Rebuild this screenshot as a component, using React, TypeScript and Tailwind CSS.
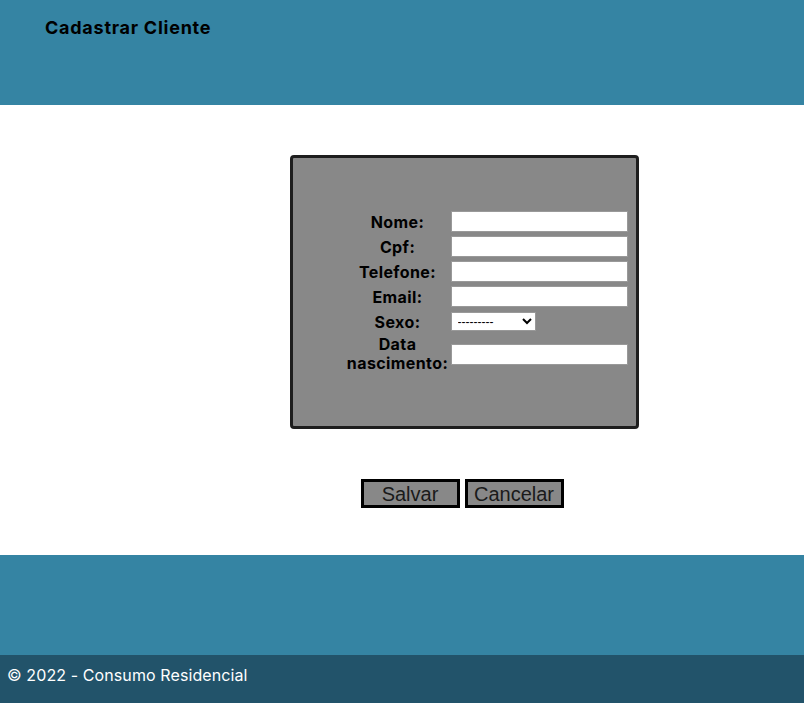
export default function App() {
  const rows = [
    { label: "Nome" },
    { label: "Cpf" },
    { label: "Telefone" },
    { label: "Email" },
  ];

  return (
    <div className="min-h-[703px] w-full bg-white font-['Inter',sans-serif]">
      {/* HEADER */}
      <header className="h-[105px] bg-[#3584a3] pl-[45px] pt-[14px]">
        <h1 className="text-[18px] font-bold tracking-[0.75px] text-black">Cadastrar Cliente</h1>
      </header>

      {/* MAIN */}
      <main className="flex h-[450px] flex-col items-center pl-[120px] pt-[50px]">
        <div className="ml-[4px] flex h-[274px] w-[349px] justify-end rounded-[4px] border-[3px] border-[#1e1e1e] bg-[#888888] pr-[8px] pt-[53px]">
          <div className="grid grid-cols-[106px_177px] content-start gap-y-[4px]">
            {rows.map((r) => (
              <div key={r.label} className="contents">
                <label className="flex h-[21px] items-center justify-center text-[16px] font-bold tracking-[0.4px] text-black">
                  {r.label}:
                </label>
                <input className="h-[21px] w-[177px] border border-[#999] bg-white" />
              </div>
            ))}
            <label className="flex h-[21px] items-center justify-center text-[16px] font-bold tracking-[0.4px] text-black">
              Sexo:
            </label>
            <div className="flex items-center">
              <select className="h-[19px] w-[85px] border border-[#999] bg-white pl-[2px] font-['Liberation_Sans',sans-serif] text-[12px] text-black">
                <option>---------</option>
              </select>
            </div>
            <label className="-mt-[1px] flex flex-col items-center text-[16px] leading-[19px] font-bold tracking-[0.4px] text-black">
              <span>Data</span>
              <span>nascimento:</span>
            </label>
            <div className="-mt-[1px] flex items-center">
              <input className="h-[21px] w-[177px] border border-[#999] bg-white" />
            </div>
          </div>
        </div>

        <div className="mt-[50px] flex gap-[5px]">
          <button className="h-[29px] w-[99px] border-[3px] border-black bg-[#888888] font-['Liberation_Sans',sans-serif] text-[20px] leading-none text-[#1a1a1a]">
            Salvar
          </button>
          <button className="h-[29px] w-[99px] border-[3px] border-black bg-[#888888] font-['Liberation_Sans',sans-serif] text-[20px] leading-none text-[#1a1a1a]">
            Cancelar
          </button>
        </div>
      </main>

      {/* FOOTER */}
      <footer>
        <div className="h-[100px] bg-[#3584a3]" />
        <div className="flex h-[48px] items-center bg-[#22536a] pb-[9px] pl-[7px] text-[16px] tracking-[0.1px] text-white">
          © 2022 - Consumo Residencial
        </div>
      </footer>
    </div>
  );
}
